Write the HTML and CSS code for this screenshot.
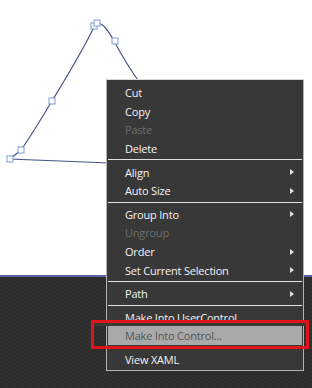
FILE: index.html
```html
<!DOCTYPE html>
<html lang="en">
<head>
    <meta charset="UTF-8">
    <meta name="viewport" content="width=device-width, initial-scale=1.0">
    <title>Context Menu</title>
    <link rel="stylesheet" href="styles.css">
</head>
<body>

    <div class="stage">
        <div class="artboard">
            <svg class="shape" width="312" height="275" viewBox="0 0 312 275">
                <path d="M96 23 C103 22 109 32 114 41 C121 54 129 68 140 83" />
                <path d="M94 27 C82 52 66 78 52 101 C41 119 31 136 21 150 L10 159 L110 163" />
                <rect x="91" y="23" width="6" height="6" />
                <rect x="94" y="20" width="6" height="6" />
                <rect x="112" y="38" width="6" height="6" />
                <rect x="49" y="98" width="6" height="6" />
                <rect x="18" y="147" width="6" height="6" />
                <rect x="7" y="156" width="6" height="6" />
            </svg>
        </div>
        <div class="workspace"></div>

        <ul class="menu">
            <li class="item">Cut</li>
            <li class="item">Copy</li>
            <li class="item disabled">Paste</li>
            <li class="item">Delete</li>
            <li class="sep"></li>
            <li class="item sub">Align</li>
            <li class="item sub">Auto Size</li>
            <li class="sep"></li>
            <li class="item sub">Group Into</li>
            <li class="item disabled">Ungroup</li>
            <li class="item sub">Order</li>
            <li class="item sub">Set Current Selection</li>
            <li class="sep"></li>
            <li class="item sub">Path</li>
            <li class="sep"></li>
            <li class="item">Make Into UserControl</li>
            <li class="item active">Make Into Control...</li>
            <li class="sep"></li>
            <li class="item">View XAML</li>
        </ul>

        <div class="callout"></div>
    </div>

</body>
</html>
```

FILE: styles.css
```css
body {
    margin: 0;
    font-family: "Open Sans", "Noto Sans", sans-serif;
}
.stage {
    position: relative;
    width: 312px;
    height: 388px;
    overflow: hidden;
    display: flex;
    flex-direction: column;
}
.artboard {
    height: 275px;
    background: #fff;
}
.shape {
    display: block;
}
.shape path {
    fill: none;
    stroke: #4a5688;
    stroke-width: 1.2;
}
.shape rect {
    fill: #fff;
    stroke: #7d97dc;
    stroke-width: 1;
}
.workspace {
    flex: 1;
    border-top: 2px solid #5a63a6;
    background: repeating-conic-gradient(#2b2b2b 0 25%, #313131 0 50%) 0 0 / 4px 4px;
}
.menu {
    position: absolute;
    left: 106px;
    top: 79px;
    width: 198px;
    box-sizing: border-box;
    margin: 0;
    padding: 3px 0 2px;
    list-style: none;
    background: #383838;
    border: 1px solid #b4b4b4;
    border-top-color: #d8d8d8;
    color: #f4f4f4;
    font-size: 11px;
    letter-spacing: -0.2px;
}
.item {
    box-sizing: border-box;
    height: 18.6px;
    margin: 0 1px;
    padding: 1px 8px 0 17px;
    display: flex;
    align-items: center;
    justify-content: space-between;
    white-space: nowrap;
}
.item.sub::after {
    content: "";
    border-left: 4px solid #e0e0e0;
    border-top: 3.5px solid transparent;
    border-bottom: 3.5px solid transparent;
}
.item.disabled {
    color: #6e6e6e;
}
.item.active {
    background: #a9a9a9;
    color: #555;
}
.sep {
    height: 1px;
    margin: 2px 1px;
    background: #e2e2e2;
}
.callout {
    position: absolute;
    left: 91px;
    top: 320px;
    width: 218px;
    height: 29px;
    box-sizing: border-box;
    border: 3px solid #e0131c;
    box-shadow: inset 0 3px 0 #383838;
}
```
